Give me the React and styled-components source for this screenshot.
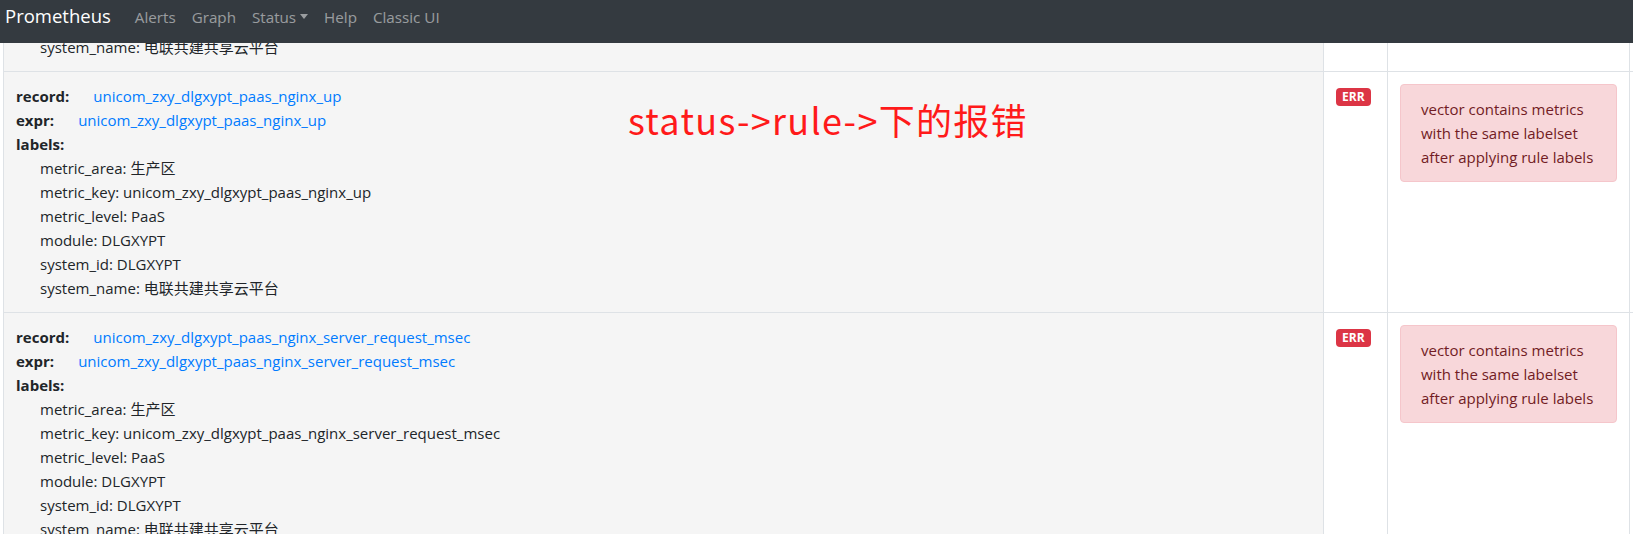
import React from 'react';
import styled, { createGlobalStyle } from 'styled-components';

const FONT = `"Open Sans", "Noto Sans CJK SC", sans-serif`;

const GlobalStyle = createGlobalStyle`
  html, body {
    margin: 0;
    padding: 0;
    background: #fff;
    overflow: hidden;
  }
  body {
    font-family: ${FONT};
    font-size: 15px;
    line-height: 24px;
    color: #212529;
  }
  * {
    box-sizing: border-box;
  }
`;

const Navbar = styled.nav`
  position: fixed;
  top: 0;
  left: 0;
  right: 0;
  z-index: 10;
  height: 43px;
  padding: 1px 5px 0;
  display: flex;
  align-items: flex-start;
  background-color: #343a40;
`;

const Brand = styled.a`
  font-size: 18.5px;
  line-height: 30px;
  color: #fff;
  margin-right: 16px;
  text-decoration: none;
`;

const NavList = styled.ul`
  display: flex;
  list-style: none;
  margin: 0;
  padding: 0;
`;

const NavLink = styled.a`
  display: block;
  padding: 4px 8px;
  font-size: 15.2px;
  line-height: 24px;
  color: rgba(255, 255, 255, 0.5);
  text-decoration: none;

  ${(p) =>
    p.$dropdown &&
    `
    &::after {
      content: '';
      display: inline-block;
      margin-left: 4px;
      vertical-align: 4px;
      border-top: 5px solid;
      border-left: 4.5px solid transparent;
      border-right: 4.5px solid transparent;
    }
  `}
`;

const Viewport = styled.div`
  position: relative;
  height: 534px;
  overflow: hidden;
  padding-left: 3px;
`;

const Annotation = styled.div`
  position: absolute;
  left: 628px;
  top: 95px;
  font-family: "Noto Sans CJK SC", sans-serif;
  font-size: 36px;
  line-height: 48px;
  letter-spacing: 1.3px;
  color: #ff1a1a;
  white-space: nowrap;
`;

const RulesTable = styled.table`
  margin-top: -170px;
  border-collapse: collapse;
  table-layout: fixed;
  width: 1826px;
`;

const Cell = styled.td`
  border: 1px solid #dee2e6;
  padding: 12px;
  vertical-align: top;
  background-color: ${(p) => (p.$rule ? '#f5f5f5' : '#fff')};
  width: ${(p) => p.$width}px;
`;

const Line = styled.div`
  white-space: nowrap;
`;

const Key = styled.span`
  font-weight: 700;
  margin-right: 24px;
`;

const RuleLink = styled.a`
  color: #007bff;
  text-decoration: none;
`;

const LabelLine = styled.div`
  margin-left: 24px;
  white-space: nowrap;
`;

const Badge = styled.span`
  display: inline-block;
  padding: 3px 6px;
  font-size: 12px;
  font-weight: 700;
  line-height: 1;
  color: #fff;
  background-color: #dc3545;
  border-radius: 4px;
  vertical-align: 1px;
`;

const Alert = styled.div`
  padding: 12px 20px;
  border: 1px solid #f5c6cb;
  border-radius: 4px;
  background-color: #f8d7da;
  color: #721c24;
`;

const labelsFor = (key) => [
  ['metric_area', '生产区'],
  ['metric_key', key],
  ['metric_level', 'PaaS'],
  ['module', 'DLGXYPT'],
  ['system_id', 'DLGXYPT'],
  ['system_name', '电联共建共享云平台'],
];

const rules = [
  'unicom_zxy_dlgxypt_paas_nginx_active',
  'unicom_zxy_dlgxypt_paas_nginx_up',
  'unicom_zxy_dlgxypt_paas_nginx_server_request_msec',
];

const RuleRow = ({ name }) => (
  <tr>
    <Cell $rule $width={1320}>
      <Line>
        <Key>record:</Key>
        <RuleLink href="#">{name}</RuleLink>
      </Line>
      <Line>
        <Key>expr:</Key>
        <RuleLink href="#">{name}</RuleLink>
      </Line>
      <Line>
        <Key>labels:</Key>
      </Line>
      {labelsFor(name).map(([k, v]) => (
        <LabelLine key={k}>
          {k}: {v}
        </LabelLine>
      ))}
    </Cell>
    <Cell $width={64}>
      <Badge>ERR</Badge>
    </Cell>
    <Cell $width={242}>
      <Alert>vector contains metrics with the same labelset after applying rule labels</Alert>
    </Cell>
    <Cell $width={200} />
  </tr>
);

export default function App() {
  return (
    <>
      <GlobalStyle />
      <Navbar>
        <Brand href="#">Prometheus</Brand>
        <NavList>
          <li><NavLink href="#">Alerts</NavLink></li>
          <li><NavLink href="#">Graph</NavLink></li>
          <li><NavLink href="#" $dropdown>Status</NavLink></li>
          <li><NavLink href="#">Help</NavLink></li>
          <li><NavLink href="#">Classic UI</NavLink></li>
        </NavList>
      </Navbar>
      <Viewport>
        <RulesTable>
          <tbody>
            {rules.map((r) => (
              <RuleRow key={r} name={r} />
            ))}
          </tbody>
        </RulesTable>
        <Annotation>status-&gt;rule-&gt;下的报错</Annotation>
      </Viewport>
    </>
  );
}
